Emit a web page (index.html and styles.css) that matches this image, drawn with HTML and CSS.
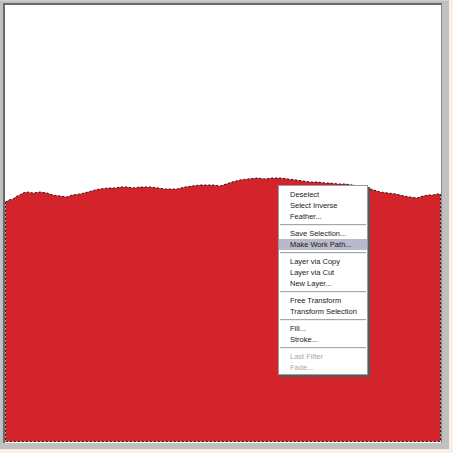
FILE: index.html
```html
<!DOCTYPE html>
<html>
<head>
<meta charset="utf-8">
<link rel="stylesheet" href="styles.css">
</head>
<body>
<div class="frame">
  <div class="canvas">
    <svg class="art" width="436" height="438" viewBox="5 5 436 438" xmlns="http://www.w3.org/2000/svg">
      <rect x="5" y="5" width="436" height="438" fill="#ffffff"/>
      <path id="sel" d="M5.5,202 L9,200 L13,199 L17,196 L20,195 L23,193 L27,192 L33,193 L40,192 L47,193 L53,195 L60,196 L67,197 L72,195 L80,194 L88,192 L95,190 L100,189 L108,188 L115,188 L121,187 L127,187 L134,188 L140,187 L150,187 L158,188 L165,189 L172,189 L177,189 L185,187 L192,186 L200,185 L207,185 L213,185 L220,186 L226,184 L232,182 L240,180 L248,179 L257,178 L265,179 L272,178 L280,178 L288,179 L296,180 L303,181 L310,182 L318,182 L325,183 L330,183 L338,184 L345,184 L352,185 L360,186 L367,188 L374,190 L380,192 L388,193 L396,194 L404,196 L410,197 L417,198 L423,196 L428,195 L433,195 L437,194 L440.5,194 L440.5,441.5 L5.5,441.5 Z" fill="#d3232b"/>
      <use href="#sel" fill="none" stroke="#ffffff" stroke-width="1"/>
      <use href="#sel" fill="none" stroke="#1a1a1a" stroke-width="1" stroke-dasharray="2 2"/>
    </svg>
    <div class="menu">
      <div class="item">Deselect</div>
      <div class="item">Select Inverse</div>
      <div class="item">Feather...</div>
      <div class="sep"></div>
      <div class="item">Save Selection...</div>
      <div class="item active">Make Work Path...</div>
      <div class="sep"></div>
      <div class="item">Layer via Copy</div>
      <div class="item">Layer via Cut</div>
      <div class="item">New Layer...</div>
      <div class="sep"></div>
      <div class="item">Free Transform</div>
      <div class="item">Transform Selection</div>
      <div class="sep"></div>
      <div class="item">Fill...</div>
      <div class="item">Stroke...</div>
      <div class="sep"></div>
      <div class="item disabled">Last Filter</div>
      <div class="item disabled">Fade...</div>
    </div>
  </div>
</div>
</body>
</html>
```
FILE: styles.css
```css
html, body {
  margin: 0;
  padding: 0;
}
body {
  background: #f7f1e2;
  width: 453px;
  height: 453px;
  overflow: hidden;
}
.frame {
  width: 449px;
  height: 449px;
  box-sizing: border-box;
  background: #c0c0c0;
  border-top: 1px solid #d0d0d0;
  padding: 2px 7px 5px 3px;
  display: flex;
}
.canvas {
  position: relative;
  width: 436px;
  height: 438px;
  border-top: 2px solid #6a6a6a;
  border-left: 2px solid #6a6a6a;
  border-right: 1px solid #8a8a8a;
  background: #ffffff;
}
.art {
  display: block;
}
.menu {
  position: absolute;
  left: 273px;
  top: 180px;
  width: 88px;
  background: #ffffff;
  border: 1px solid #9a9a9a;
  padding: 3px 0 1px 0;
  box-shadow: 2px 2px 0 #5a5a5a;
  font-family: "Liberation Sans", Arial, sans-serif;
  font-size: 7.5px;
  color: #1a1a1a;
}
.item {
  height: 11px;
  line-height: 11px;
  padding-left: 11px;
  white-space: nowrap;
}
.item.active {
  background: #b8b9cb;
}
.item.disabled {
  color: #a8a8a8;
}
.sep {
  height: 0;
  margin: 2px 1px 2px 1px;
  border-top: 1px solid #a6a6a6;
  border-bottom: 1px solid #f0f0f0;
}
```
